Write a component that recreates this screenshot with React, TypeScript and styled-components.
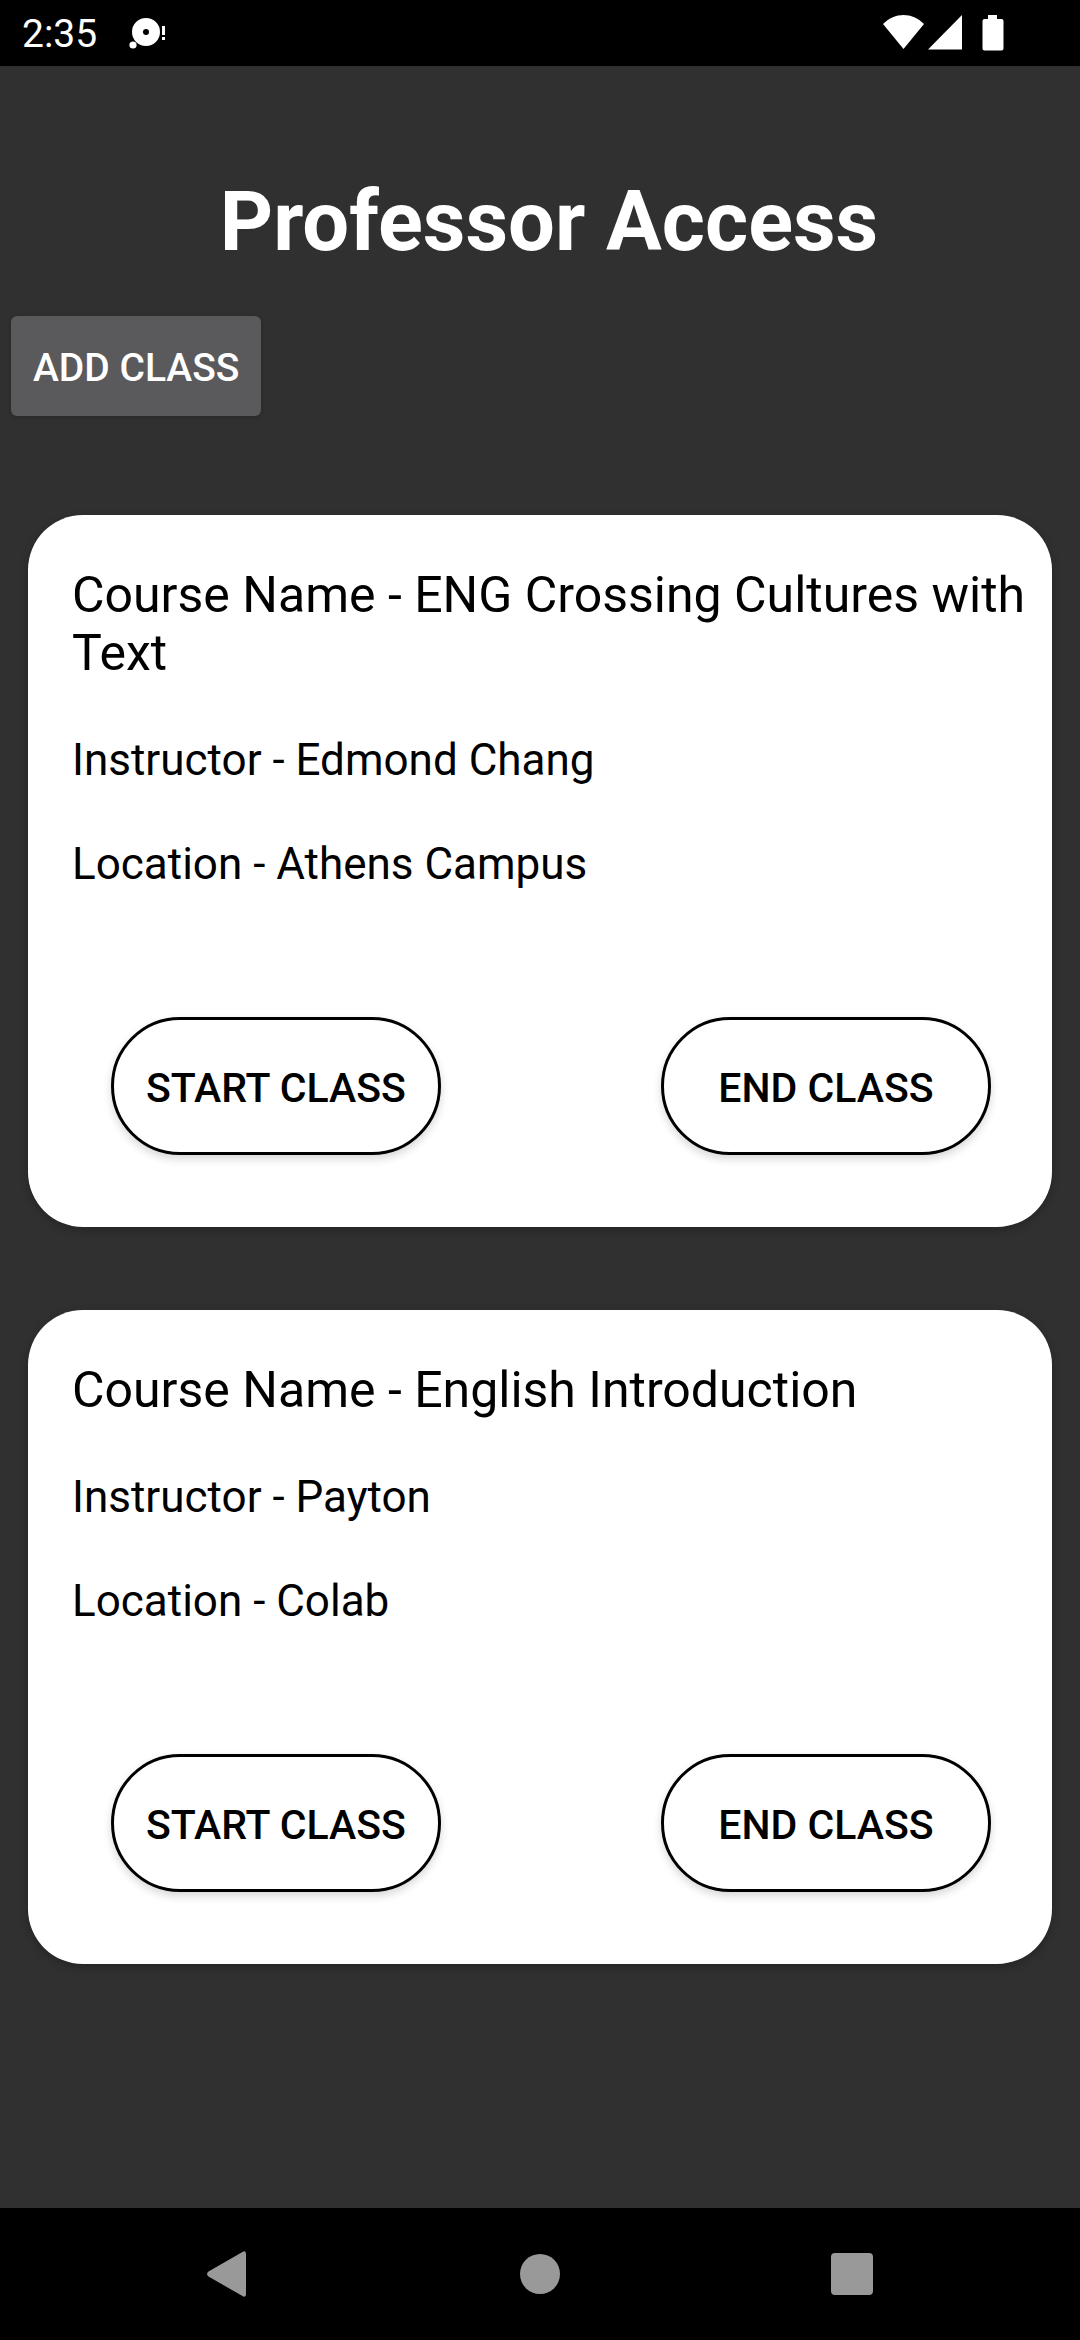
import React from "react";
import styled, { createGlobalStyle } from "styled-components";

const GlobalStyle = createGlobalStyle`
  *, *::before, *::after { box-sizing: border-box; }
  body { margin: 0; background: #303030; font-family: Roboto, "Noto Sans", sans-serif; }
  h1, h2, p { margin: 0; font-weight: 400; }
  svg { display: block; }
  button { border: 0; padding: 0; background: none; font-family: inherit; cursor: pointer; }
`;

const Screen = styled.div`
  display: flex;
  flex-direction: column;
  min-height: 100vh;
  background: #303030;
`;

const StatusBar = styled.header`
  display: flex;
  align-items: center;
  height: 66px;
  padding: 0 75px 0 22px;
  background: #000;
  color: #fff;
`;

const Clock = styled.time`
  margin-right: 32px;
  padding-top: 3px;
  font-size: 39px;
  line-height: 63px;
`;

const StatusIcons = styled.div`
  display: flex;
  align-items: center;
  margin-left: auto;
`;

const Content = styled.main`
  flex: 1;
  display: flex;
  flex-direction: column;
  padding-top: 107px;
`;

const Title = styled.h1`
  padding-left: 18px;
  color: #fff;
  font-size: 83px;
  font-weight: 700;
  line-height: 98px;
  text-align: center;
`;

const AddButton = styled.button`
  align-self: flex-start;
  height: 100px;
  margin: 45px 0 0 11px;
  padding: 4px 22px 0;
  border-radius: 6px;
  background: #5a5a5c;
  box-shadow: 0 1px 5px rgba(0, 0, 0, 0.2);
  color: #fff;
  font-size: 39px;
  font-weight: 500;
`;

const ClassList = styled.div`
  display: flex;
  flex-direction: column;
  gap: 83px;
  padding: 99px 28px 83px;
`;

const Card = styled.article`
  display: flex;
  flex-direction: column;
  gap: 52px;
  padding: 51px 16px 72px 44px;
  border-radius: 55px;
  background: #fff;
  box-shadow: 0 3px 8px rgba(0, 0, 0, 0.25);
  color: #000;
`;

const CourseName = styled.h2`
  font-size: 50px;
  line-height: 58px;
`;

const Detail = styled.p`
  font-size: 44px;
  line-height: 52px;
`;

const Actions = styled.div`
  display: flex;
  justify-content: space-between;
  padding: 75px 45px 0 39px;
`;

const ActionButton = styled.button`
  width: 330px;
  height: 138px;
  padding-top: 4px;
  border: 3px solid #000;
  border-radius: 69px;
  background: #fff;
  box-shadow: 0 4px 8px rgba(0, 0, 0, 0.16);
  color: #000;
  font-size: 41px;
  font-weight: 500;
`;

const NavBar = styled.nav`
  display: grid;
  grid-template-columns: repeat(3, 1fr);
  height: 132px;
  padding: 0 72px;
  background: #000;
`;

const NavButton = styled.button`
  display: flex;
  align-items: center;
  justify-content: center;
`;

const classes = [
  { course: "ENG Crossing Cultures with Text", instructor: "Edmond Chang", location: "Athens Campus" },
  { course: "English Introduction", instructor: "Payton", location: "Colab" },
];

export default function App() {
  return (
    <Screen>
      <GlobalStyle />
      <StatusBar>
        <Clock>2:35</Clock>
        <svg width="38" height="34" viewBox="0 0 38 34" fill="#fff" aria-hidden="true">
          <path
            fillRule="evenodd"
            d="M17 2a14 14 0 1 1 0 28a14 14 0 1 1 0-28zM17 13a3 3 0 1 0 0 6a3 3 0 1 0 0-6z"
          />
          <circle cx="4" cy="29" r="3.6" />
          <path d="M33 10h3v9h-3zM33 21h3v3h-3z" />
        </svg>
        <StatusIcons>
          <svg width="122" height="38" viewBox="0 0 122 38" fill="#fff" aria-hidden="true">
            <path d="M0 10C12-2 29-2 41 10L20.500 35z" />
            <path d="M79 1V35.500H45z" />
            <path d="M105 1h9v4h4.500a2 2 0 0 1 2 2v27.500a2 2 0 0 1-2 2h-17a2 2 0 0 1-2-2V7a2 2 0 0 1 2-2h3.500z" />
          </svg>
        </StatusIcons>
      </StatusBar>
      <Content>
        <Title>Professor Access</Title>
        <AddButton type="button">ADD CLASS</AddButton>
        <ClassList>
          {classes.map((item) => (
            <Card key={item.course}>
              <CourseName>{`Course Name - ${item.course}`}</CourseName>
              <Detail>{`Instructor - ${item.instructor}`}</Detail>
              <Detail>{`Location - ${item.location}`}</Detail>
              <Actions>
                <ActionButton type="button">START CLASS</ActionButton>
                <ActionButton type="button">END CLASS</ActionButton>
              </Actions>
            </Card>
          ))}
        </ClassList>
      </Content>
      <NavBar>
        <NavButton type="button" aria-label="Back">
          <svg width="44" height="46" viewBox="0 0 44 46" fill="#999">
            <path d="M36 1.200Q40-1.500 40 3V43Q40 47.500 36 44.800L2.500 25.500Q-.5 23 2.500 20.500z" />
          </svg>
        </NavButton>
        <NavButton type="button" aria-label="Home">
          <svg width="40" height="40" viewBox="0 0 40 40" fill="#999">
            <circle cx="20" cy="20" r="20" />
          </svg>
        </NavButton>
        <NavButton type="button" aria-label="Recent apps">
          <svg width="42" height="42" viewBox="0 0 42 42" fill="#999">
            <rect width="42" height="42" rx="4" />
          </svg>
        </NavButton>
      </NavBar>
    </Screen>
  );
}
